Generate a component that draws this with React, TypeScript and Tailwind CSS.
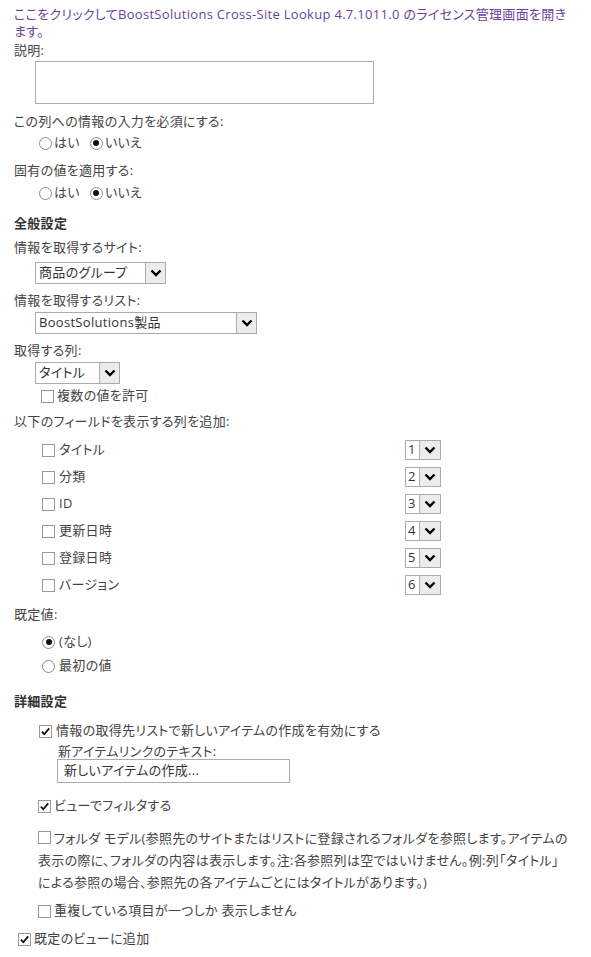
import React from "react";

function Checkbox({ checked = false }: { checked?: boolean }) {
  return (
    <span className="relative inline-flex h-[13px] w-[13px] shrink-0 items-center justify-center border border-[#9a9a9a] bg-white">
      {checked && (
        <svg viewBox="0 0 12 12" className="h-[11px] w-[11px]">
          <path d="M2 6.2 L4.7 9 L10 2.6" fill="none" stroke="#111" strokeWidth="2" />
        </svg>
      )}
    </span>
  );
}

function Radio({ checked = false }: { checked?: boolean }) {
  return (
    <span className="inline-flex h-[13px] w-[13px] shrink-0 items-center justify-center rounded-full border border-[#8a8a8a] bg-white">
      {checked && <span className="h-[6px] w-[6px] rounded-full bg-[#111]" />}
    </span>
  );
}

function Chevron() {
  return (
    <svg viewBox="0 0 12 8" className="h-[8px] w-[12px]">
      <path d="M1.5 1.5 L6 6 L10.5 1.5" fill="none" stroke="#000" strokeWidth="2.4" />
    </svg>
  );
}

function Select({ value, width }: { value: string; width: string }) {
  return (
    <div className={`flex h-[22px] items-stretch border border-[#ababab] bg-white ${width}`}>
      <span className="flex flex-1 items-center truncate pl-[3px] text-[13px] text-[#333]">{value}</span>
      <span className="flex w-[20px] items-center justify-center border-l border-[#ababab] bg-[#ececec]">
        <Chevron />
      </span>
    </div>
  );
}

function NumSelect({ n }: { n: number }) {
  return (
    <div className="flex h-[20px] w-[36px] items-stretch border border-[#ababab] bg-white">
      <span className="flex flex-1 items-center pl-[2px] text-[13px] text-[#333]">{n}</span>
      <span className="flex w-[21px] items-center justify-center border-l border-[#ababab] bg-[#ececec]">
        <Chevron />
      </span>
    </div>
  );
}

const fields = ["タイトル", "分類", "ID", "更新日時", "登録日時", "バージョン"];

export default function App() {
  return (
    <div className="min-h-[957px] w-[591px] bg-white pl-[14px] pt-[6px] font-['Open_Sans','Noto_Sans_CJK_JP',sans-serif] text-[13px] tracking-[0.3px] text-[#444] [font-feature-settings:'palt']">
      <a className="block leading-[17px] text-[#6b3fa0]">
        ここをクリックしてBoostSolutions Cross-Site Lookup 4.7.1011.0 のライセンス管理画面を開き
        <br />
        ます。
      </a>

      <div className="mt-[2px] leading-[17px]">説明:</div>
      <div className="ml-[21px] mt-[2px] h-[43px] w-[339px] border border-[#ababab] bg-white" />

      <div className="mt-[9px] leading-[17px]">この列への情報の入力を必須にする:</div>
      <div className="ml-[25px] mt-[4px] flex h-[18px] items-center">
        <Radio />
        <span className="ml-[2px]">はい</span>
        <span className="ml-[10px]" />
        <Radio checked />
        <span className="ml-[2px]">いいえ</span>
      </div>

      <div className="mt-[10px] leading-[17px]">固有の値を適用する:</div>
      <div className="ml-[25px] mt-[5px] flex h-[18px] items-center">
        <Radio />
        <span className="ml-[2px]">はい</span>
        <span className="ml-[10px]" />
        <Radio checked />
        <span className="ml-[2px]">いいえ</span>
      </div>

      <div className="mt-[13px] font-bold leading-[17px] text-[#333]">全般設定</div>

      <div className="mt-[7px] leading-[17px]">情報を取得するサイト:</div>
      <div className="ml-[21px] mt-[6px]">
        <Select value="商品のグループ" width="w-[131px]" />
      </div>

      <div className="mt-[8px] leading-[17px]">情報を取得するリスト:</div>
      <div className="ml-[21px] mt-[3px]">
        <Select value="BoostSolutions製品" width="w-[222px]" />
      </div>

      <div className="mt-[8px] leading-[17px]">取得する列:</div>
      <div className="ml-[21px] mt-[3px]">
        <Select value="タイトル" width="w-[85px]" />
      </div>
      <div className="ml-[27px] mt-[4px] flex h-[16px] items-center gap-[3px]">
        <Checkbox />
        <span>複数の値を許可</span>
      </div>

      <div className="mt-[9px] leading-[17px]">以下のフィールドを表示する列を追加:</div>
      <div className="mt-[9px] flex flex-col gap-[5px]">
        {fields.map((f, i) => (
          <div key={f} className="flex h-[22px] w-[427px] items-center">
            <div className="ml-[28px] flex flex-1 items-center gap-[4px]">
              <Checkbox />
              <span>{f}</span>
            </div>
            <NumSelect n={i + 1} />
          </div>
        ))}
      </div>

      <div className="mt-[10px] leading-[17px]">既定値:</div>
      <div className="ml-[28px] mt-[10px] flex h-[18px] items-center gap-[4px]">
        <Radio checked />
        <span>(なし)</span>
      </div>
      <div className="ml-[28px] mt-[6px] flex h-[18px] items-center gap-[4px]">
        <Radio />
        <span>最初の値</span>
      </div>

      <div className="mt-[18px] font-bold leading-[17px] text-[#333]">詳細設定</div>

      <div className="ml-[25px] mt-[12px] flex h-[18px] items-center gap-[4px]">
        <Checkbox checked />
        <span>情報の取得先リストで新しいアイテムの作成を有効にする</span>
      </div>
      <div className="ml-[44px] mt-[3px] leading-[16px]">新アイテムリンクのテキスト:</div>
      <div className="ml-[43px] flex h-[24px] w-[233px] items-center border border-[#ababab] bg-white pl-[6px] text-[#333]">
        新しいアイテムの作成...
      </div>

      <div className="ml-[24px] mt-[14px] flex h-[18px] items-center gap-[3px]">
        <Checkbox checked />
        <span>ビューでフィルタする</span>
      </div>

      <div className="ml-[24px] mt-[12px] leading-[22px]">
        <span className="mr-[3px] inline-flex align-[-1px]">
          <Checkbox />
        </span>
        フォルダ モデル(参照先のサイトまたはリストに登録されるフォルダを参照します。アイテムの
        <br />
        表示の際に、フォルダの内容は表示します。注:各参照列は空ではいけません。例:列「タイトル」
        <br />
        による参照の場合、参照先の各アイテムごとにはタイトルがあります。)
      </div>

      <div className="ml-[24px] mt-[9px] flex h-[18px] items-center gap-[3px]">
        <Checkbox />
        <span>重複している項目が一つしか 表示しません</span>
      </div>

      <div className="ml-[4px] mt-[10px] flex h-[18px] items-center gap-[3px]">
        <Checkbox checked />
        <span>既定のビューに追加</span>
      </div>
    </div>
  );
}
